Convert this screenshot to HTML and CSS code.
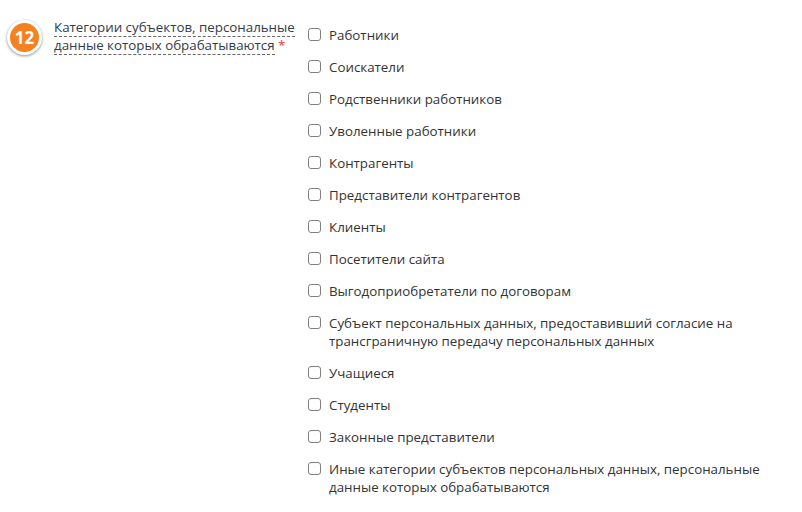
FILE: index.html
```html
<!DOCTYPE html>
<html lang="ru">
<head>
  <meta charset="UTF-8">
  <title>Категории субъектов</title>
  <link rel="stylesheet" href="styles.css">
</head>
<body>

<!-- Пункт 12 анкеты -->
<div class="pole">
  <div class="nomer"><span>12</span></div>

  <div class="podpis">
    <span class="podskazka">Категории субъектов, персональные данные которых обрабатываются</span> <span class="zvezda">*</span>
  </div>

  <ul class="varianty">
    <li><span class="flag"></span><span>Работники</span></li>
    <li><span class="flag"></span><span>Соискатели</span></li>
    <li><span class="flag"></span><span>Родственники работников</span></li>
    <li><span class="flag"></span><span>Уволенные работники</span></li>
    <li><span class="flag"></span><span>Контрагенты</span></li>
    <li><span class="flag"></span><span>Представители контрагентов</span></li>
    <li><span class="flag"></span><span>Клиенты</span></li>
    <li><span class="flag"></span><span>Посетители сайта</span></li>
    <li><span class="flag"></span><span>Выгодоприобретатели по договорам</span></li>
    <li><span class="flag"></span><span>Субъект персональных данных, предоставивший согласие на трансграничную передачу персональных данных</span></li>
    <li><span class="flag"></span><span>Учащиеся</span></li>
    <li><span class="flag"></span><span>Студенты</span></li>
    <li><span class="flag"></span><span>Законные представители</span></li>
    <li><span class="flag"></span><span>Иные категории субъектов персональных данных, персональные данные которых обрабатываются</span></li>
  </ul>
</div>

</body>
</html>
```

FILE: styles.css
```css
body {
  font-family: "Open Sans", Arial, sans-serif;
  font-size: 13.33px;
  line-height: 18px;
  color: #333;
  background-color: #fff;
  margin: 0;
}

.pole {
  display: flex;
  align-items: flex-start;
  padding: 18px 0 0 7px;
}

/* Оранжевый кружок с номером */
.nomer {
  width: 35px;
  height: 35px;
  margin-top: 2px;
  border-radius: 50%;
  background: #fff;
  box-shadow: 0 1px 3px rgba(0,0,0,0.45);
  display: flex;
  align-items: center;
  justify-content: center;
  flex-shrink: 0;
}

.nomer span {
  width: 29px;
  height: 29px;
  border-radius: 50%;
  background: #f58220;
  color: #fff;
  font-weight: bold;
  font-size: 17px;
  line-height: 29px;
  text-align: center;
}

.podpis {
  width: 250px;
  margin-left: 12px;
  margin-right: 3px;
  color: #2f3b4c;
}

.podskazka {
  border-bottom: 1px dashed #666;
}

.zvezda {
  color: #e53935;
}

.varianty {
  list-style: none;
  margin: 8px 0 0 0;
  padding: 0;
  width: 470px;
}

.varianty li {
  display: flex;
  align-items: flex-start;
  gap: 8px;
  margin-bottom: 14px;
}

.flag {
  width: 11px;
  height: 11px;
  margin-top: 2px;
  margin-left: 1px;
  border: 1px solid #808080;
  border-radius: 3px;
  flex-shrink: 0;
  background: #fff;
}
```
